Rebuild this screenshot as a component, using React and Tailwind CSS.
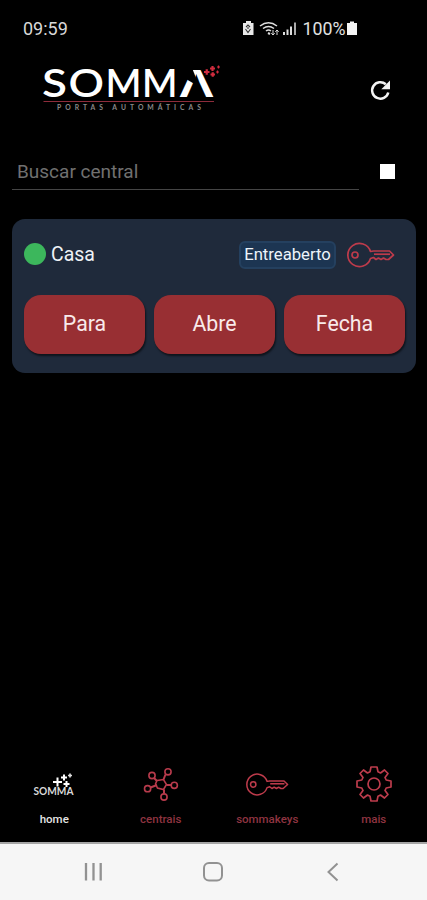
const actions = ["Para", "Abre", "Fecha"];

const StatusIcons = () => (
  <svg width="120" height="24" viewBox="242 16 120 24" className="block overflow-visible">
    <path d="M246 21h5v2h2.500v12h-10.500v-12h3z" fill="#e8e8e8" />
    <path d="M246 27l2-2 2 2M245.500 29l2.500 3.500 2.500-3.500M248 27v2" fill="none" stroke="#333" strokeWidth="1.100" />
    <g fill="none" stroke="#dedede" strokeWidth="1.500">
      <path d="M260 26q8.500-6.500 17 0" />
      <path d="M263 28.500q5.500-4 11 0" />
      <path d="M266 31q2.500-2 5 0" />
      <path d="M268 33l2 1" strokeWidth="2" />
      <path d="M273 30v5M271.300 33.200l1.700 1.800 1.700-1.800M277 35v-5M275.300 31.800l1.700-1.800 1.700 1.800" strokeWidth="1" />
    </g>
    <g fill="#dcdcdc">
      <path d="M283 32h2v3h-2zM286.500 29.500h2v5.500h-2zM290 26.500h2v8.500h-2z" />
      <path d="M294 22.500h2v12.500h-2z" fill="#aaa" />
    </g>
    <text x="302.500" y="34.800" fontSize="17.500" fill="#e0e0e0" textLength="43" lengthAdjust="spacingAndGlyphs" fontFamily="Roboto, sans-serif">100%</text>
    <path d="M350 21.500h4v1.500h3v12h-10v-12h3z" fill="#f4f4f4" />
  </svg>
);

const Logo = () => (
  <svg width="184" height="56" viewBox="40 56 184 56" className="block overflow-visible">
    <g fill="#fff" fontFamily="Lato, sans-serif" fontWeight="600" fontSize="37.500">
      <text y="97" x="42" textLength="25" lengthAdjust="spacingAndGlyphs">S</text>
      <text y="97" x="68.500" textLength="35.500" lengthAdjust="spacingAndGlyphs">O</text>
      <text y="97" x="105.500" textLength="36" lengthAdjust="spacingAndGlyphs">M</text>
      <text y="97" x="142" textLength="35.500" lengthAdjust="spacingAndGlyphs">M</text>
      <text y="97" x="178.500" textLength="36" lengthAdjust="spacingAndGlyphs" fontFamily="Inter, sans-serif">Λ</text>
    </g>
    {/* detached left leg of the A */}
    <path d="M184 69H192.500L197.500 82L194.500 84L186 79z" fill="#000" />
    <path d="M43.500 101.500H214" stroke="#8e2c3b" strokeWidth="1.200" />
    <text x="57" y="110" fontSize="6.800" fontWeight="700" fill="#8a8a8a" textLength="144" fontFamily="Lato, sans-serif">PORTAS AUTOMÁTICAS</text>
    <g stroke="#d02c3e" strokeWidth="2.200">
      <path d="M204 72h5.500M206.750 69.300v5.400M210 68.500h5M212.500 66v5M210.500 74.500h4.500M212.750 72.300v4.400" />
      <path d="M216 72h3M217.500 70.500v3M217 67h3M218.500 65.500v3" strokeWidth="1.200" />
    </g>
  </svg>
);

const Key = ({ className }) => (
  <svg viewBox="0 0 48 28" className={className} fill="none" stroke="#bd3b4b" strokeWidth="1.700" strokeLinejoin="round">
    <path d="M23.500 10.500A11.600 11.600 0 1 0 23.500 17.500L26.500 16.500L29 18.500L31.500 17L34 18.500L36.500 17L39 18.500L41.500 18.500L46.500 14L42.500 10L26.500 10z" />
    <circle cx="8" cy="14" r="3" />
    <path d="M27 13.200H43" />
  </svg>
);

const HomeIcon = () => (
  <svg width="42" height="28" viewBox="33 773 42 28" className="overflow-visible">
    <text x="33.500" y="797.500" fontSize="10.500" fontWeight="700" fill="#d8d8d8" textLength="40" lengthAdjust="spacingAndGlyphs" fontFamily="Lato, sans-serif">SOMMA</text>
    <path d="M53 785h9M57.500 780.500v9M61 780.500h6M64 777.500v6M63.500 787h6M66.500 784v6" stroke="#fff" strokeWidth="2" />
    <path d="M68 778.500h4M70 776.500v4" stroke="#ddd" strokeWidth="1.700" />
  </svg>
);

const HubIcon = () => (
  <svg width="38" height="36" viewBox="142 767 38 36" fill="none" stroke="#b83b4c" strokeWidth="1.600">
    <path d="M157 781.500L163.500 780.500L166.500 785.500L163.500 790.500L157.500 789L155.500 785z" />
    <path d="M154 779l3 3M165.500 775.500l-2 5M171 786h-4.500M164 794.500v-4M150.500 788.500l6.500-2.500" strokeWidth="2" />
    <circle cx="152" cy="776.500" r="3.100" />
    <circle cx="168" cy="772.800" r="3.100" />
    <circle cx="174.300" cy="786.300" r="3.100" />
    <circle cx="164" cy="798" r="3.100" />
    <circle cx="147.600" cy="789.700" r="3.100" />
  </svg>
);

const GearIcon = () => (
  <svg width="38" height="38" viewBox="-19 -19 38 38" fill="none" stroke="#bd3c4c" strokeWidth="1.700" strokeLinejoin="round">
    <path d="M-3-17H3L4-12.200L6.500-11L10.500-14L14-10.500L11-6.500L12.200-4L17-3V3L12.200 4L11 6.500L14 10.500L10.500 14L6.500 11L4 12.200L3 17H-3L-4 12.200L-6.500 11L-10.500 14L-14 10.500L-11 6.500L-12.200 4L-17 3V-3L-12.200-4L-11-6.500L-14-10.500L-10.500-14L-6.500-11L-4-12.200z" />
    <circle r="6" />
  </svg>
);

const tabs = [
  { label: "home", icon: <HomeIcon />, color: "text-[#e4e4e4]" },
  { label: "centrais", icon: <HubIcon />, color: "text-[#8f3440]" },
  { label: "sommakeys", icon: <Key className="w-[43px] h-[25px]" />, color: "text-[#8f3440]" },
  { label: "mais", icon: <GearIcon />, color: "text-[#8f3440]" },
];

const App = () => {
  return (
    <div className="w-[427px] h-[900px] bg-black flex flex-col overflow-hidden font-['Roboto',sans-serif]">
      <div className="h-14 shrink-0 pt-4 pl-[23px] pr-[65px] flex justify-between items-start">
        <span className="text-[18px] leading-[25px] text-[#d8d8d8]">09:59</span>
        <StatusIcons />
      </div>

      <header className="h-[90px] shrink-0 pl-10 pr-[35px] flex justify-between items-start">
        <Logo />
        <svg width="24" height="24" viewBox="0 0 24 24" className="mt-[22px]" fill="none">
          <path d="M20.300 14.500A8.200 8.200 0 1 1 17.800 6.300" stroke="#f4f4f4" strokeWidth="2.500" />
          <path d="M22 2.500V11.200H13.300z" fill="#f4f4f4" />
        </svg>
      </header>

      <div className="h-[73px] shrink-0 pl-3 pr-8 flex justify-between items-start">
        <div className="w-[347px] h-[44px] border-b border-[#454545] pl-[5px] pt-3 text-[19px] leading-[27px] text-[#707070]">
          Buscar central
        </div>
        <div className="w-[15px] h-[15px] mt-[18px] bg-white" />
      </div>

      <section className="ml-3 w-[404px] h-[154px] shrink-0 rounded-[13px] bg-[#1f2a3b] px-3 flex flex-col">
        <div className="h-[76px] pt-[22px] flex items-start">
          <span className="w-[22px] h-[22px] mt-[2px] rounded-full bg-[#3cb75c]" />
          <span className="ml-[5px] text-[19.5px] leading-[27px] text-[#eef2f6]">Casa</span>
          <span className="ml-auto w-[97px] h-[28px] rounded-md border-2 border-[#24405f] bg-[#1c3552] flex items-center justify-center pb-px text-[16.7px] text-[#edf4fa]">
            Entreaberto
          </span>
          <Key className="w-[48px] h-[28px] ml-[11px] mr-[9px]" />
        </div>
        <div className="flex gap-[9px]">
          {actions.map((label) => (
            <button
              key={label}
              className="w-[121px] h-[59px] shrink-0 rounded-[17px] bg-[#982f33] pb-px text-[21.3px] text-[#f8eaea] shadow-[1px_2px_2px_rgba(0,0,0,0.55)]"
            >
              {label}
            </button>
          ))}
        </div>
      </section>

      <nav className="mt-auto h-[78px] shrink-0 pl-[1px] grid grid-cols-4">
        {tabs.map((tab) => (
          <div key={tab.label} className="flex flex-col items-center">
            <div className="h-[40px] flex items-center">{tab.icon}</div>
            <span className={`mt-[7px] text-[11.5px] leading-4 font-medium ${tab.color}`}>{tab.label}</span>
          </div>
        ))}
      </nav>

      <footer className="h-[58px] shrink-0 border-t-2 border-[#a5a5a5] bg-[#f6f6f6]">
        <svg width="427" height="56" viewBox="0 844 427 56" fill="none" stroke="#929292" strokeWidth="2">
          <path d="M86 863v17.500M93.500 863v17.500M100.700 863v17.500" strokeWidth="2.300" />
          <rect x="204" y="863" width="18" height="17.500" rx="5" />
          <path d="M337.500 863.500L328.500 872L337.500 880.500" />
        </svg>
      </footer>
    </div>
  );
};

export default App;
